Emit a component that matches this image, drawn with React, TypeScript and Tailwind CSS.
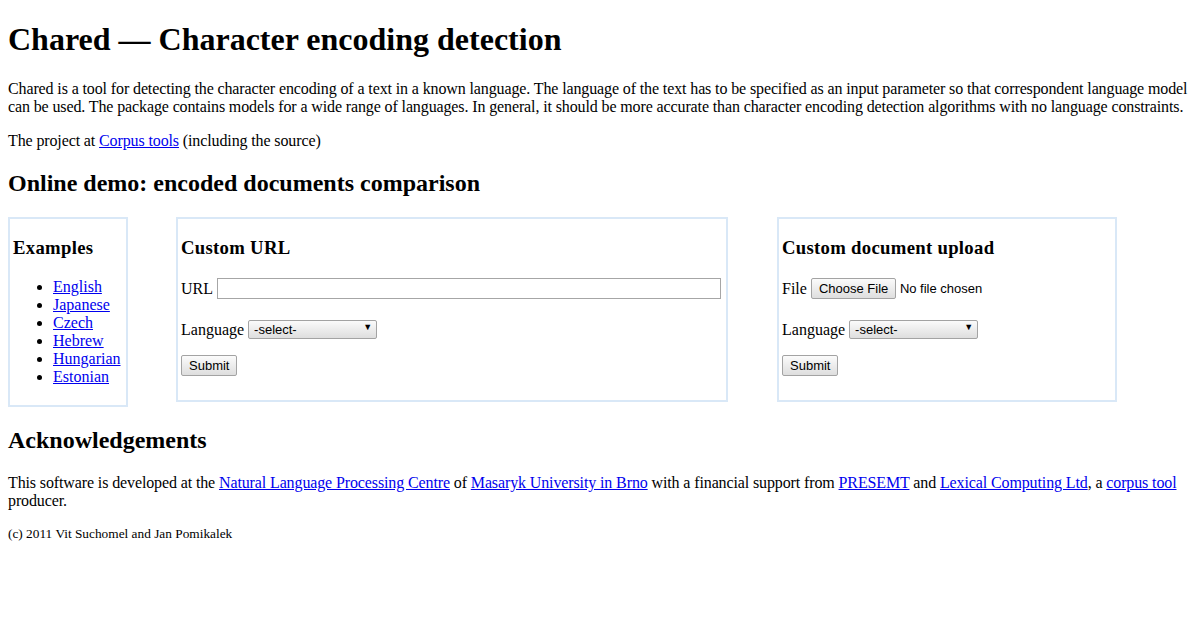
const serif = "font-['Liberation_Serif',serif]";

const Link = ({ children }: { children: React.ReactNode }) => (
  <a href="#" className="text-[#0000ee] underline">
    {children}
  </a>
);

const NativeButton = ({ children, className = '' }: { children: React.ReactNode; className?: string }) => (
  <button
    type="button"
    className={`h-[21px] whitespace-nowrap rounded-[2px] border border-[#a3a3a3] bg-gradient-to-b from-[#fbfbfb] to-[#dedede] px-[7px] font-['Liberation_Sans',sans-serif] text-[13px] leading-none text-black ${className}`}
  >
    {children}
  </button>
);

const LanguageSelect = () => (
  <div className="relative ml-[4px] inline-block">
    <select className="h-[19px] w-[129px] appearance-none rounded-[2px] border border-[#a3a3a3] bg-gradient-to-b from-[#fbfbfb] to-[#dedede] pl-[5px] font-['Liberation_Sans',sans-serif] text-[13px] leading-none text-black">
      <option>-select-</option>
    </select>
    <span className="pointer-events-none absolute right-[5px] top-[3px] text-[9px] leading-none text-black">▼</span>
  </div>
);

const Box = ({ width, children }: { width: string; children: React.ReactNode }) => (
  <div className={`${width} shrink-0 border-2 border-[#d9e8f7] p-[3px]`}>{children}</div>
);

const BoxTitle = ({ children }: { children: React.ReactNode }) => (
  <h3 className="mt-[15px] text-[18.72px] font-bold leading-[normal] tracking-[0.3px]">{children}</h3>
);

export default function App() {
  const examples = ['English', 'Japanese', 'Czech', 'Hebrew', 'Hungarian', 'Estonian'];

  return (
    <div className={`${serif} min-h-[630px] bg-white px-2 text-[16px] leading-[normal] text-black`}>
      <h1 className="my-[21.44px] text-[32px] font-bold leading-[normal]">Chared — Character encoding detection</h1>
      <p className="my-4 tracking-[-0.12px]">
        Chared is a tool for detecting the character encoding of a text in a known language. The language of the text has to be
        specified as an input parameter so that correspondent language model can be used. The package contains models for a wide
        range of languages. In general, it should be more accurate than character encoding detection algorithms with no language
        constraints.
      </p>
      <p className="my-4 tracking-[-0.12px]">
        The project at <Link>Corpus tools</Link> (including the source)
      </p>
      <h2 className="my-[19.92px] text-[24px] font-bold leading-[normal]">Online demo: encoded documents comparison</h2>

      <div className="flex items-start gap-[48px]">
        {/* Examples */}
        <Box width="w-[120px]">
          <BoxTitle>Examples</BoxTitle>
          <ul className="mt-[19.5px] mb-[16px] list-disc pl-10">
            {examples.map((ex) => (
              <li key={ex}>
                <Link>{ex}</Link>
              </li>
            ))}
          </ul>
        </Box>

        {/* Custom URL */}
        <Box width="w-[552px]">
          <BoxTitle>Custom URL</BoxTitle>
          <div className="mt-[19.5px] flex h-[21px] items-center">
            <span>URL</span>
            <input
              type="text"
              className="ml-[4px] h-[21px] w-[504px] border border-[#a6a6a6] bg-white px-1 text-[13px] outline-none"
            />
          </div>
          <div className="mt-[21px] flex h-[19px] items-center">
            <span>Language</span>
            <LanguageSelect />
          </div>
          <div className="mt-[16px] flex">
            <NativeButton>Submit</NativeButton>
          </div>
          <div className="h-[21px]" />
        </Box>

        {/* Custom document upload */}
        <Box width="w-[340px] ml-px">
          <BoxTitle>Custom document upload</BoxTitle>
          <div className="mt-[19.5px] flex h-[21px] items-center">
            <span>File</span>
            <NativeButton className="ml-[4px] w-[85px] px-0">Choose File</NativeButton>
            <span className="ml-[4px] font-['Liberation_Sans',sans-serif] text-[13px]">No file chosen</span>
          </div>
          <div className="mt-[21px] flex h-[19px] items-center">
            <span>Language</span>
            <LanguageSelect />
          </div>
          <div className="mt-[16px] flex">
            <NativeButton>Submit</NativeButton>
          </div>
          <div className="h-[21px]" />
        </Box>
      </div>

      <h2 className="my-[19.92px] text-[24px] font-bold leading-[normal]">Acknowledgements</h2>
      <p className="my-4 tracking-[-0.12px]">
        This software is developed at the <Link>Natural Language Processing Centre</Link> of{' '}
        <Link>Masaryk University in Brno</Link> with a financial support from <Link>PRESEMT</Link> and{' '}
        <Link>Lexical Computing Ltd</Link>, a <Link>corpus tool</Link> producer.
      </p>
      <p className="my-4 text-[13.33px]">(c) 2011 Vit Suchomel and Jan Pomikalek</p>
    </div>
  );
}
